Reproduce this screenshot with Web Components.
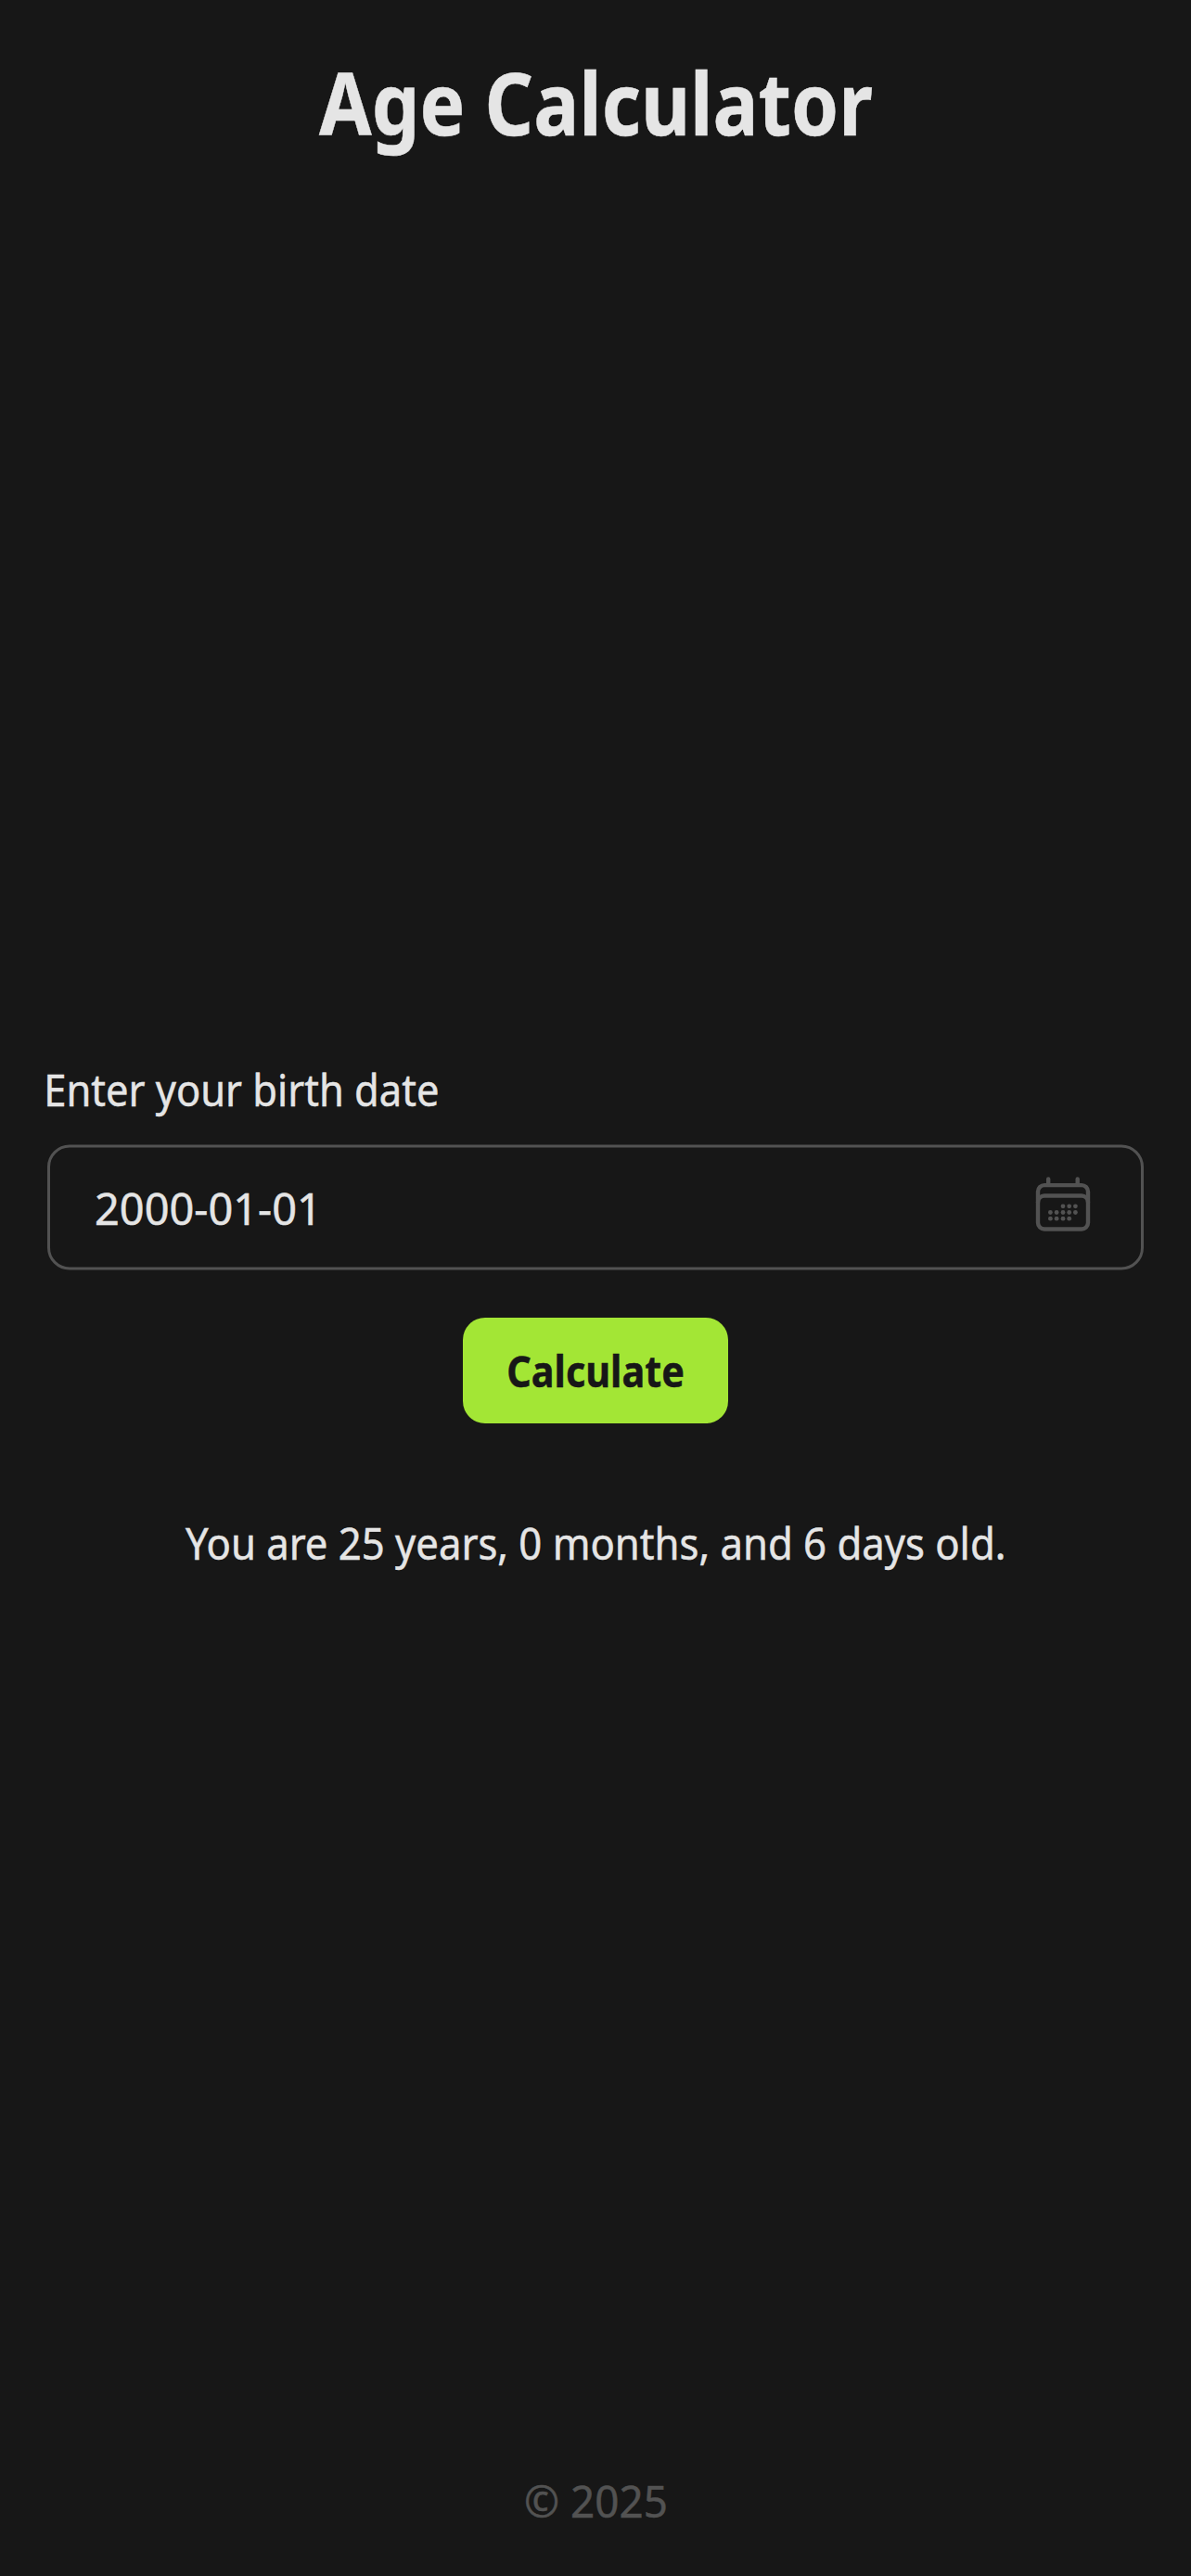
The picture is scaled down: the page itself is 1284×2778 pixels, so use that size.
<!DOCTYPE html>
<html lang="en">
<head>
<meta charset="utf-8">
<title>Age Calculator</title>
<style>
html,body{margin:0;background:#171717}
body{font-family:"Noto Sans",sans-serif;font-size:47px;color:#e5e5e5}
</style>
</head>
<body>
<age-app></age-app>
<script>
// One line of text, condensed horizontally to the given width.
class FitText extends HTMLElement {
  connectedCallback() {
    const root = this.attachShadow({mode: 'open'});
    const w = +this.getAttribute('width');
    root.innerHTML = `<style>
      :host{display:block;white-space:pre;width:${w}px;line-height:72px;-webkit-text-stroke:.5px currentColor}
      span{display:inline-block;transform-origin:0 50%}
    </style><span><slot></slot></span>`;
    const cs = getComputedStyle(this);
    const ctx = document.createElement('canvas').getContext('2d');
    ctx.font = `${cs.fontWeight} ${cs.fontSize} ${cs.fontFamily}`;
    const m = ctx.measureText(this.textContent);
    const left = -m.actualBoundingBoxLeft;
    const s = w / (m.actualBoundingBoxRight - left);
    // actualBoundingBoxLeft is negative when the first glyph starts after the origin
    root.querySelector('span').style.transform = `translateX(${-left * s}px) scaleX(${s})`;
  }
}
customElements.define('fit-text', FitText);

class AppHeader extends HTMLElement {
  constructor() {
    super();
    this.attachShadow({mode: 'open'}).innerHTML = `<style>
      :host{display:flex;justify-content:center;padding:48px 0}
      h1{margin:0;font-size:94px;font-weight:700}
      fit-text{line-height:124px}
    </style><h1><fit-text width="596">Age Calculator</fit-text></h1>`;
  }
}
customElements.define('app-header', AppHeader);

class CalendarIcon extends HTMLElement {
  constructor() {
    super();
    const dots = [[29,31.3],[35.7,31.3],[42.4,31.3],[15.4,38],[22.1,38],[29,38],[35.7,38],[42.4,38],[15.4,44.7],[22.1,44.7],[29,44.7],[35.7,44.7]];
    this.attachShadow({mode: 'open'}).innerHTML = `<style>
      :host{display:block;width:58px;height:58px}svg{display:block;overflow:visible}
    </style><svg width="58" height="58" viewBox="0 0 58 58" fill="none" stroke="#525252" stroke-width="4.4" stroke-linecap="round">
      <rect x="2" y="8.6" width="54" height="47.4" rx="7"/>
      <path d="M2 27a7 7 0 0 1 7-7h40a7 7 0 0 1 7 7"/>
      <path d="M13.2 2v5M44.7 2v5"/>
      <g fill="#525252" stroke="none">${dots.map(([x, y]) => `<circle cx="${x}" cy="${y}" r="2.4"/>`).join('')}</g>
    </svg>`;
  }
}
customElements.define('calendar-icon', CalendarIcon);

class DateField extends HTMLElement {
  constructor() {
    super();
    this.attachShadow({mode: 'open'}).innerHTML = `<style>
      :host{display:flex;flex-direction:column;gap:23px}
      .box{box-sizing:border-box;height:135px;margin:0 3px;padding:0 55px 0 50px;border:3px solid #525252;border-radius:24px;
        display:flex;align-items:center;justify-content:space-between;transform:translateY(.5px)}
      .label{padding-left:3px}
      calendar-icon{margin-bottom:7px}
    </style><div class="label"><slot></slot></div>
    <div class="box"><fit-text width="233">2000-01-01</fit-text><calendar-icon></calendar-icon></div>`;
  }
}
customElements.define('date-field', DateField);

class LimeButton extends HTMLElement {
  constructor() {
    super();
    this.attachShadow({mode: 'open'}).innerHTML = `<style>
      :host{display:block}
      button{display:flex;align-items:center;justify-content:center;width:286px;height:114px;padding:0;border:0;border-radius:24px;
        background:#a3e635;color:#171717;font:inherit;font-weight:700}
    </style><button><slot></slot></button>`;
  }
}
customElements.define('lime-button', LimeButton);

class AgeApp extends HTMLElement {
  constructor() {
    super();
    this.attachShadow({mode: 'open'}).innerHTML = `<style>
      :host{display:flex;flex-direction:column;height:2778px;background:#171717;overflow:hidden}
      app-header{box-sizing:border-box;height:220px}
      main{flex:1;display:flex;flex-direction:column;padding:919px 48px 0}
      lime-button{align-self:center;margin-top:52px}
      lime-button fit-text{font-weight:700}
      .result{align-self:center;margin-top:93px;margin-right:2px}
      footer{display:flex;justify-content:center;padding-bottom:45px;color:#525252}
    </style>
    <app-header></app-header>
    <main>
      <date-field><fit-text width="421">Enter your birth date</fit-text></date-field>
      <lime-button><fit-text width="188">Calculate</fit-text></lime-button>
      <fit-text class="result" width="882">You are 25 years, 0 months, and 6 days old.</fit-text>
    </main>
    <footer><fit-text width="151">© 2025</fit-text></footer>`;
  }
}
customElements.define('age-app', AgeApp);
</script>
</body>
</html>
